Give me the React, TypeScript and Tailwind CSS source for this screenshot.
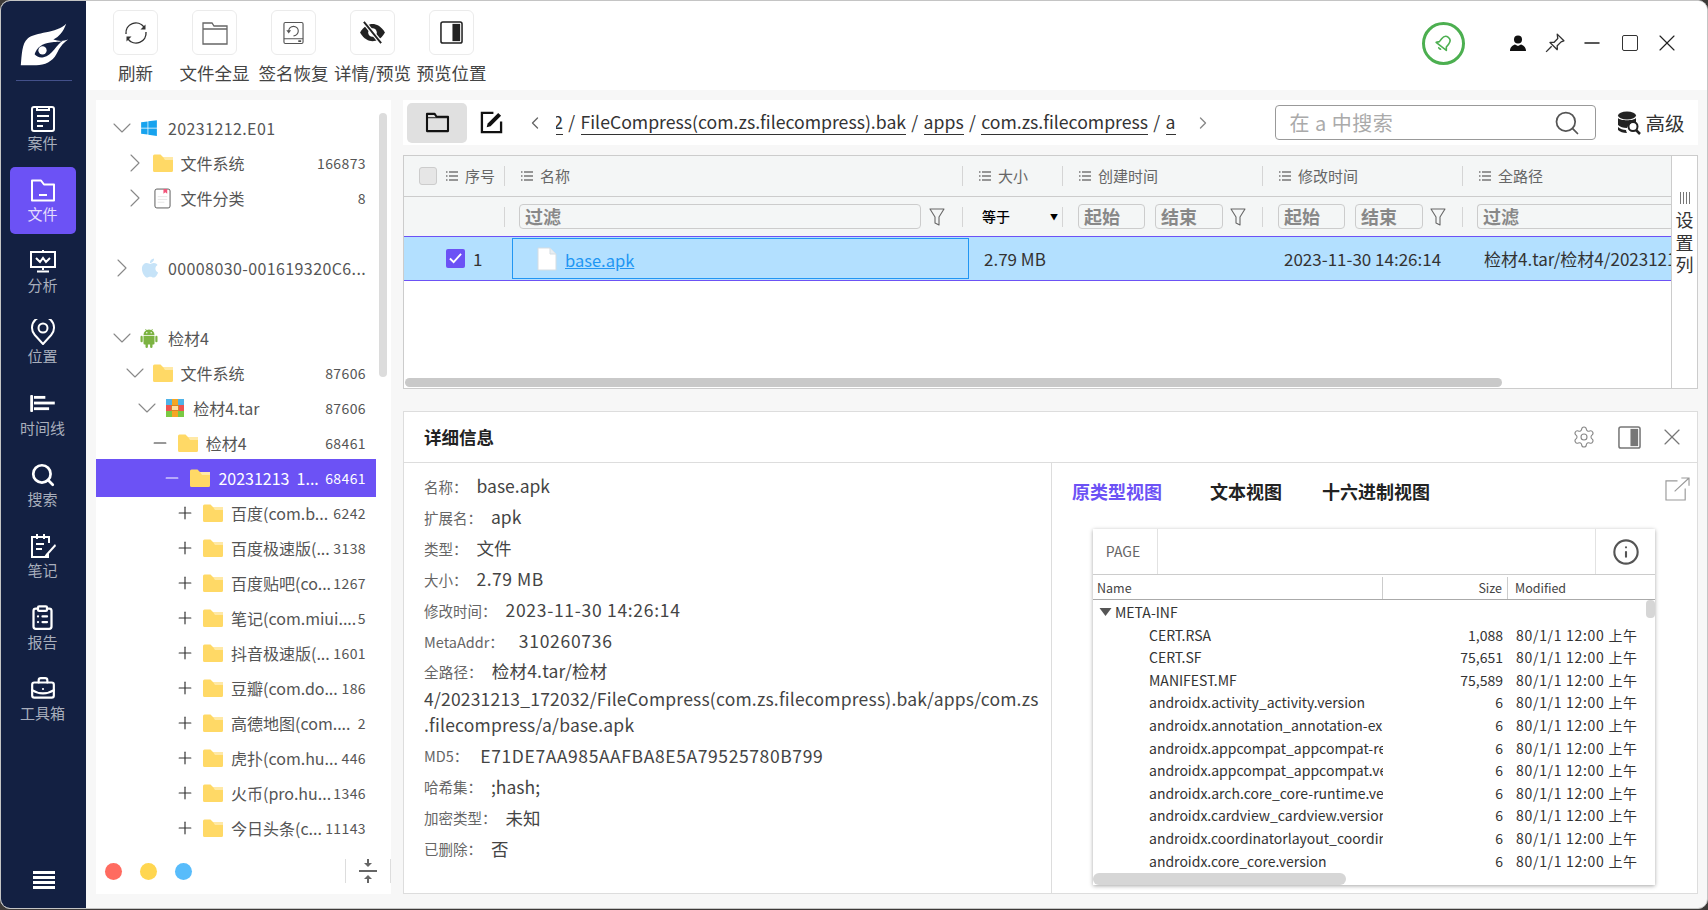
import type { ReactNode } from "react";
import { FaApple, FaWindows } from "react-icons/fa";
import {
  BriefcaseBusiness,
  ChevronDown,
  ChevronLeft,
  ChevronRight,
  ClipboardList,
  Info,
  Minus,
  Plus,
  Search,
  Settings,
  X,
} from "lucide-react";

type IconProps = { className?: string };

function Logo() {
  return (
    <svg viewBox="0 0 86 80" className="w-[85px] h-[79px] shrink-0">
      <path
        d="M20 65 C21 55 21 43 27 38 C35 31 56 33 66 23 C63 31 59 36 53 39 C58 41 63 41 68 39 C62 43 59 48 56 54 C52 62 42 66 33 65 Z"
        fill="#fff"
      />
      <path d="M34 54 C36 47 42 43 50 42 C55 41 59 42 63 40 C56 44 52 55 43 57 C39 58 36 56 34 54 Z" fill="#132042" />
      <circle cx="42" cy="50" r="4.2" fill="#fff" />
    </svg>
  );
}

function CaseIcon({ className }: IconProps) {
  return (
    <svg viewBox="0 0 24 26" className={className} fill="none" stroke="currentColor" strokeWidth="2">
      <rect x="1" y="1" width="22" height="24" rx="2" />
      <path d="M6 1v3h12V1M6 10h12M6 15h12M6 20h6" />
    </svg>
  );
}

function FileNavIcon({ className }: IconProps) {
  return (
    <svg viewBox="0 0 24 24" className={className} fill="none" stroke="currentColor" strokeWidth="2">
      <path d="M1 2.5h9l3 4h10v16H1z" strokeLinejoin="round" />
      <path d="M8 17h8" />
    </svg>
  );
}

function ChartIcon({ className }: IconProps) {
  return (
    <svg viewBox="0 0 26 24" className={className} fill="none" stroke="currentColor" strokeWidth="2">
      <path d="M1 3h24v15H1zM13 1v2M13 18v3M7 22.5h12" />
      <path d="M6 9l4 4 3-4 3 4 4-4" />
    </svg>
  );
}

function PinNavIcon({ className }: IconProps) {
  return (
    <svg viewBox="0 0 24 26" className={className} fill="none" stroke="currentColor" strokeWidth="2">
      <path d="M12 25L3.800 16A11 11 0 1 1 20.200 16Z" strokeLinejoin="round" />
      <circle cx="12" cy="9" r="4.500" />
    </svg>
  );
}

function TimelineIcon({ className }: IconProps) {
  return (
    <svg viewBox="0 0 26 18" className={className} fill="currentColor">
      <rect x="0" y="0" width="3" height="18" rx="1" />
      <rect x="4" y="1" width="12" height="3" />
      <rect x="4" y="7" width="22" height="3" />
      <rect x="4" y="13" width="16" height="3" />
    </svg>
  );
}

function NoteIcon({ className }: IconProps) {
  return (
    <svg viewBox="0 0 26 26" className={className} fill="none" stroke="currentColor" strokeWidth="2">
      <path d="M18 21v3H2V4h17v6" />
      <path d="M7 1v5M14 1v5M6 11h8M6 16h6" />
      <path d="M25 11l-9 10-2 3 3-1 9-10z" fill="currentColor" stroke="none" />
    </svg>
  );
}

function MenuLines() {
  return (
    <div className="flex flex-col gap-[2px] w-[22px]">
      <div className="h-[3px] bg-white" />
      <div className="h-[3px] bg-white" />
      <div className="h-[3px] bg-white" />
      <div className="h-[3px] bg-white" />
    </div>
  );
}

function RefreshIcon() {
  return (
    <svg viewBox="0 0 24 24" className="w-[24px] h-[24px]" fill="none" stroke="#333" strokeWidth="1.4">
      <path d="M2 13A10 10 0 0 1 20 6" />
      <path d="M22 11A10 10 0 0 1 4 18" />
      <path d="M21.5 3.5v5h-5z" fill="#333" stroke="none" />
      <path d="M2.5 20.5v-5h5z" fill="#333" stroke="none" />
    </svg>
  );
}

function FolderOutline() {
  return (
    <svg viewBox="0 0 26 24" className="w-[26px] h-[24px]" fill="none" stroke="#666" strokeWidth="1.3">
      <path d="M1 2h9l2 3h13v18H1zM1 8h24" />
    </svg>
  );
}

function DiskRestore() {
  return (
    <svg viewBox="0 0 22 24" className="w-[21px] h-[24px]" fill="none" stroke="#555" strokeWidth="1.2">
      <rect x="1" y="1" width="20" height="22" rx="1.5" />
      <path d="M1 18h20" />
      <path d="M6 10a5 5 0 1 1 5 5" />
      <path d="M3.5 9h5L6 12.5z" fill="#555" stroke="none" />
      <path d="M16 20.5h3" strokeWidth="1.6" />
    </svg>
  );
}

function EyeOff() {
  return (
    <svg viewBox="0 0 28 24" className="w-[27px] h-[23px]">
      <path d="M1 12C5 5 10 3 14 3s9 2 13 9c-4 7-9 9-13 9S5 19 1 12z" fill="#222" />
      <circle cx="14" cy="12" r="4.5" fill="#fff" />
      <path d="M5 1l18 22" stroke="#fff" strokeWidth="4.5" />
      <path d="M5 1l18 22" stroke="#222" strokeWidth="2" />
    </svg>
  );
}

function PaneIcon({ dark }: { dark: boolean }) {
  return (
    <svg viewBox="0 0 24 24" className="w-[23px] h-[23px]" fill="none">
      <rect x="1" y="1" width="22" height="22" rx="2" stroke={dark ? "#222" : "#777"} strokeWidth="1.6" />
      <rect x="13" y="3" width="8" height="18" fill={dark ? "#222" : "#777"} />
    </svg>
  );
}

function Bell() {
  return (
    <svg viewBox="0 0 20 20" className="w-[21px] h-[21px]" fill="none" stroke="#4caf50" strokeWidth="1.5" strokeLinejoin="round">
      <g transform="rotate(38 10 10)">
        <path d="M10 2.500c3 0 4.200 2.500 4.200 5v3.500l2 2.500H3.800l2-2.500V7.500c0-2.500 1.200-5 4.200-5z" />
        <path d="M8.500 15.500a1.800 1.800 0 0 0 3 0" />
      </g>
    </svg>
  );
}

function UserIcon() {
  return (
    <svg viewBox="0 0 16 16" className="w-[16px] h-[16px]" fill="#111">
      <circle cx="8" cy="4.5" r="4" />
      <path d="M0 16c0-4 3-6 5-6.5l3 1.5 3-1.5c2 .5 5 2.5 5 6.5z" />
    </svg>
  );
}

function PinIcon() {
  return (
    <svg viewBox="0 0 18 18" className="w-[20px] h-[20px]" fill="none" stroke="#333" strokeWidth="1.2" strokeLinejoin="round">
      <path d="M11 1l6 6-2.500 1-3.500 3.500 0 3.500-6.500-6.500 3.500 0 3.500-3.500z" />
      <path d="M6 12l-5 5" />
    </svg>
  );
}

function Funnel() {
  return (
    <svg viewBox="0 0 16 18" className="w-[16px] h-[18px]" fill="none" stroke="#666" strokeWidth="1.1" strokeLinejoin="round">
      <path d="M1 1h14l-5 8v8l-4-2V9z" />
    </svg>
  );
}

function ListIcon() {
  return (
    <svg viewBox="0 0 12 10" className="w-[12px] h-[10px] shrink-0" stroke="#777" strokeWidth="1.3">
      <path d="M3 1h9M3 5h9M3 9h9M0 1h1.5M0 5h1.5M0 9h1.5" />
    </svg>
  );
}

function FolderYellow() {
  return (
    <svg viewBox="0 0 20 18" className="w-[20px] h-[18px]">
      <path d="M0 2a1.5 1.5 0 0 1 1.5-1.5h6L10 3h8.5A1.5 1.5 0 0 1 20 4.500V16.500a1.500 1.500 0 0 1-1.500 1.500h-17A1.500 1.500 0 0 1 0 16.500z" fill="#ffd966" />
      <path d="M10 3h10v3h-8z" fill="#ffe9a6" />
    </svg>
  );
}

function TarIcon() {
  return (
    <svg viewBox="0 0 18 18" className="w-[18px] h-[18px] ml-[1px]">
      <rect width="6" height="6" fill="#4fb3e8" />
      <rect x="6" width="6" height="6" fill="#f5a623" />
      <rect x="12" width="6" height="6" fill="#4fb3e8" />
      <rect y="6" width="18" height="6" fill="#ef5350" />
      <rect y="12" width="6" height="6" fill="#7ac943" />
      <rect x="6" y="12" width="6" height="6" fill="#f5a623" />
      <rect x="12" y="12" width="6" height="6" fill="#7ac943" />
      <rect x="5.500" y="6.500" width="7" height="5" fill="#ffe0a0" stroke="#d98324" />
    </svg>
  );
}

function CategoryIcon() {
  return (
    <svg viewBox="0 0 18 22" className="w-[17px] h-[21px] ml-[1px]">
      <rect x="1" y="1" width="16" height="20" rx="2" fill="#fff" stroke="#555" strokeWidth="1" />
      <path d="M10 1h4v5l-2-1.500L10 6z" fill="#f2557a" />
      <path d="M4 9h10M4 12h10M4 15h7" stroke="#e5e5e5" />
    </svg>
  );
}

function AndroidIcon() {
  return (
    <svg viewBox="0 0 18 20" className="w-[18px] h-[20px]" fill="#7cb342">
      <path d="M3.500 7a5.500 5.500 0 0 1 11 0z" />
      <path d="M5.500 1l1.500 2.500M12.500 1L11 3.500" stroke="#7cb342" strokeWidth="0.8" />
      <path d="M3.500 7.800h11v7.700a1 1 0 0 1-1 1h-9a1 1 0 0 1-1-1z" />
      <rect x="0.500" y="7.800" width="2.200" height="6.500" rx="1.100" />
      <rect x="15.300" y="7.800" width="2.200" height="6.500" rx="1.100" />
      <rect x="5.500" y="15" width="2.400" height="5" rx="1.200" />
      <rect x="10.100" y="15" width="2.400" height="5" rx="1.200" />
      <circle cx="6.800" cy="4.800" r="0.700" fill="#fff" />
      <circle cx="11.200" cy="4.800" r="0.700" fill="#fff" />
    </svg>
  );
}

function DocIcon() {
  return (
    <svg viewBox="0 0 20 24" className="w-[20px] h-[24px]">
      <path d="M1 1h12l6 6v16H1z" fill="#fff" stroke="#d5dde2" />
      <path d="M13 1v6h6" fill="#e8eef2" stroke="#d5dde2" />
    </svg>
  );
}

function DbSearch() {
  return (
    <svg viewBox="0 0 24 24" className="w-[24px] h-[24px]">
      <ellipse cx="10" cy="4.500" rx="9" ry="4" fill="#222" />
      <path d="M1 7c2 3 16 3 18 0v4c-5 0-8 3-9 6-4 0-7-1-9-3z" fill="#222" />
      <path d="M1 16c2 2 5 3 8 3 0 1 .5 2 1 3-4 0-7-1-9-3z" fill="#222" />
      <circle cx="16" cy="15.500" r="4.500" fill="none" stroke="#222" strokeWidth="2" />
      <path d="M19 19l4 4" stroke="#222" strokeWidth="2.500" />
    </svg>
  );
}

function Compress() {
  return (
    <svg viewBox="0 0 18 24" className="w-[18px] h-[24px]" fill="#666">
      <path d="M0 11h18v2H0zM8 0h2v4h3l-4 4-4-4h3zM9 16l4 4h-3v4H8v-4H5z" />
    </svg>
  );
}

function ExternalBox() {
  return (
    <svg viewBox="0 0 26 25" className="w-[25px] h-[24px]" fill="none" stroke="#999" strokeWidth="1.2">
      <path d="M13 4H1v20h20V12M10 15L25 1M17 1h8v8" />
    </svg>
  );
}

const navItems = [
  { label: "案件", icon: <CaseIcon className="w-[24px] h-[26px]" /> },
  { label: "文件", icon: <FileNavIcon className="w-[24px] h-[24px]" />, active: true },
  { label: "分析", icon: <ChartIcon className="w-[26px] h-[24px]" /> },
  { label: "位置", icon: <PinNavIcon className="w-[24px] h-[26px]" /> },
  { label: "时间线", icon: <TimelineIcon className="w-[25px] h-[17px]" /> },
  { label: "搜索", icon: <Search className="w-[26px] h-[26px]" strokeWidth={2.5} /> },
  { label: "笔记", icon: <NoteIcon className="w-[26px] h-[26px]" /> },
  { label: "报告", icon: <ClipboardList className="w-[27px] h-[27px]" strokeWidth={2} /> },
  { label: "工具箱", icon: <BriefcaseBusiness className="w-[26px] h-[26px]" strokeWidth={2} /> },
];

const toolButtons = [
  { label: "刷新", icon: <RefreshIcon /> },
  { label: "文件全显", icon: <FolderOutline /> },
  { label: "签名恢复", icon: <DiskRestore /> },
  { label: "详情/预览", icon: <EyeOff /> },
  { label: "预览位置", icon: <PaneIcon dark /> },
];

type TreeRow = {
  level: number;
  toggle: "down" | "right" | "minus" | "plus";
  icon: ReactNode;
  name: string;
  count?: string;
  selected?: boolean;
  gapAfter?: boolean;
  wide?: boolean;
};

const folder = <FolderYellow />;

const treeRows: TreeRow[] = [
  { level: 0, toggle: "down", icon: <FaWindows className="w-[18px] h-[18px] text-[#17a3ee]" />, name: "20231212.E01", wide: true },
  { level: 1, toggle: "right", icon: folder, name: "文件系统", count: "166873" },
  { level: 1, toggle: "right", icon: <CategoryIcon />, name: "文件分类", count: "8", gapAfter: true },
  { level: 0, toggle: "right", icon: <FaApple className="w-[20px] h-[22px] text-[#c6e3f8]" />, name: "00008030-001619320C6...", gapAfter: true, wide: true },
  { level: 0, toggle: "down", icon: <AndroidIcon />, name: "检材4" },
  { level: 1, toggle: "down", icon: folder, name: "文件系统", count: "87606" },
  { level: 2, toggle: "down", icon: <TarIcon />, name: "检材4.tar", count: "87606" },
  { level: 3, toggle: "minus", icon: folder, name: "检材4", count: "68461" },
  { level: 4, toggle: "minus", icon: folder, name: "20231213\u00a0\u00a01...", count: "68461", selected: true },
  { level: 5, toggle: "plus", icon: folder, name: "百度(com.b...", count: "6242" },
  { level: 5, toggle: "plus", icon: folder, name: "百度极速版(...", count: "3138" },
  { level: 5, toggle: "plus", icon: folder, name: "百度贴吧(co...", count: "1267" },
  { level: 5, toggle: "plus", icon: folder, name: "笔记(com.miui....", count: "5" },
  { level: 5, toggle: "plus", icon: folder, name: "抖音极速版(...", count: "1601" },
  { level: 5, toggle: "plus", icon: folder, name: "豆瓣(com.do...", count: "186" },
  { level: 5, toggle: "plus", icon: folder, name: "高德地图(com....", count: "2" },
  { level: 5, toggle: "plus", icon: folder, name: "虎扑(com.hu...", count: "446" },
  { level: 5, toggle: "plus", icon: folder, name: "火币(pro.hu...", count: "1346" },
  { level: 5, toggle: "plus", icon: folder, name: "今日头条(c...", count: "11143" },
];

const pathParts = ["20231213_172032", "FileCompress(com.zs.filecompress).bak", "apps", "com.zs.filecompress", "a"];

const apkFiles = [
  { name: "CERT.RSA", size: "1,088" },
  { name: "CERT.SF", size: "75,651" },
  { name: "MANIFEST.MF", size: "75,589" },
  { name: "androidx.activity_activity.version", size: "6" },
  { name: "androidx.annotation_annotation-experimental.version", size: "6" },
  { name: "androidx.appcompat_appcompat-resources.version", size: "6" },
  { name: "androidx.appcompat_appcompat.version", size: "6" },
  { name: "androidx.arch.core_core-runtime.version", size: "6" },
  { name: "androidx.cardview_cardview.version", size: "6" },
  { name: "androidx.coordinatorlayout_coordinatorlayout.version", size: "6" },
  { name: "androidx.core_core.version", size: "6" },
];

const details = [
  { label: "名称：", value: "base.apk", cls: "ml-[9px]" },
  { label: "扩展名：", value: "apk", cls: "ml-[9px]" },
  { label: "类型：", value: "文件", cls: "ml-[9px]" },
  { label: "大小：", value: "2.79 MB", cls: "ml-[9px] tracking-[0.5px]" },
  { label: "修改时间：", value: "2023-11-30 14:26:14", cls: "ml-[9px] tracking-[0.7px]" },
  { label: "MetaAddr：", value: "310260736", cls: "ml-[15px] tracking-[0.7px]" },
];

const detailsAfter = [
  { label: "MD5：", value: "E71DE7AA985AAFBA8E5A79525780B799", cls: "ml-[12px] tracking-[0.6px]" },
  { label: "哈希集：", value: ";hash;", cls: "ml-[9px]" },
  { label: "加密类型：", value: "未知", cls: "ml-[9px]" },
  { label: "已删除：", value: "否", cls: "ml-[9px]" },
];

function Sidebar() {
  return (
    <aside className="w-[85px] shrink-0 bg-[#132042] flex flex-col items-center">
      <Logo />
      <div className="w-[56px] h-px bg-[#43508a] shrink-0" />
      <nav className="mt-[15px] mr-[2px] flex flex-col items-center">
        {navItems.map((item) => (
          <div
            key={item.label}
            className={`w-[66px] h-[67px] mb-[4.3px] rounded-[5px] flex flex-col items-center justify-center text-white ${
              item.active ? "bg-[#6c52f5]" : ""
            }`}
          >
            <div className="h-[30px] flex items-center justify-center">{item.icon}</div>
            <span className={`text-[15px] leading-[20px] -mt-[1px] mb-[3px] ${item.active ? "text-[#e4defc]" : "text-[#a8aebc]"}`}>{item.label}</span>
          </div>
        ))}
      </nav>
      <div className="mt-auto mb-[19px]">
        <MenuLines />
      </div>
    </aside>
  );
}

function Toolbar() {
  return (
    <header className="h-[89px] shrink-0 bg-white flex items-start pl-[10px] pr-[26px]">
      <div className="flex pt-[9px]">
        {toolButtons.map((b) => (
          <div key={b.label} className="w-[79px] flex flex-col items-center">
            <div className="w-[45px] h-[45px] rounded-[6px] border border-[#ebebeb] flex items-center justify-center">{b.icon}</div>
            <span className="mt-[7px] text-[17.500px] leading-[22px] text-[#444] whitespace-nowrap">{b.label}</span>
          </div>
        ))}
      </div>
      <div className="ml-auto h-[84px] flex items-center">
        <div className="w-[43px] h-[43px] rounded-full border-[3px] border-[#4caf50] flex items-center justify-center">
          <Bell />
        </div>
        <div className="ml-[45px] flex items-center">
          <UserIcon />
          <div className="ml-[19px]">
            <PinIcon />
          </div>
          <Minus className="ml-[15px] w-[24px] h-[24px] text-[#222]" strokeWidth={1.5} />
          <div className="ml-[18px] w-[16px] h-[16px] rounded-[2px] border-[1.4px] border-[#333]" />
          <X className="ml-[15px] w-[28px] h-[28px] text-[#222]" strokeWidth={1} />
        </div>
      </div>
    </header>
  );
}

function Toggle({ kind, selected }: { kind: TreeRow["toggle"]; selected?: boolean }) {
  const cls = `w-[20px] h-[20px] shrink-0 ${selected ? "text-white" : "text-[#333]"}`;
  if (kind === "down") return <ChevronDown className="w-[32px] h-[32px] shrink-0 text-[#888]" strokeWidth={0.8} />;
  if (kind === "right") return <ChevronRight className="w-[32px] h-[32px] shrink-0 text-[#888]" strokeWidth={0.8} />;
  if (kind === "minus") return <Minus className={cls} strokeWidth={1.4} />;
  return <Plus className={cls} strokeWidth={1.4} />;
}

function Tree() {
  return (
    <section className="relative w-[295px] shrink-0 bg-white flex flex-col">
      <div className="absolute left-[283px] top-[13px] w-[8px] h-[264px] rounded-[4px] bg-[#dcdcdc]" />
      <div className="pt-[10.500px] w-[280px] flex-1 overflow-hidden">
        {treeRows.map((row, i) => (
          <div
            key={i}
            style={{ paddingLeft: 19 + row.level * 12.6 }}
            className={`flex items-center pr-[10px] ${row.gapAfter ? "mb-[35px]" : ""} ${
              row.selected ? "h-[38px] -my-[1.5px] bg-[#6c52f5] text-white" : "h-[35px] text-[#555]"
            }`}
          >
            <div className="w-[14px] flex items-center justify-center shrink-0">
              <Toggle kind={row.toggle} selected={row.selected} />
            </div>
            <div className="ml-[11px] w-[20px] shrink-0 flex items-center">{row.icon}</div>
            <span className={`ml-[8px] text-[16px] whitespace-nowrap ${row.wide ? "tracking-[0.4px]" : ""}`}>{row.name}</span>
            {row.count && <span className="ml-auto text-[14px] tracking-[0.4px] whitespace-nowrap">{row.count}</span>}
          </div>
        ))}
      </div>
      <div className="h-[46px] shrink-0 flex items-center pl-[9px]">
        <div className="w-[17px] h-[17px] rounded-full bg-[#ff6b60]" />
        <div className="ml-[18px] w-[17px] h-[17px] rounded-full bg-[#ffd650]" />
        <div className="ml-[18px] w-[17px] h-[17px] rounded-full bg-[#58bcfb]" />
        <div className="ml-auto w-[46px] h-[24px] border-x border-[#ddd] flex items-center justify-center">
          <Compress />
        </div>
      </div>
    </section>
  );
}

function PathBar() {
  return (
    <div className="h-[45px] shrink-0 bg-white flex items-center pl-[4px]">
      <div className="w-[60px] h-[40px] rounded-[5px] bg-[#e0e0e0] flex items-center justify-center">
        <svg viewBox="0 0 26 22" className="w-[25px] h-[21px]" fill="none" stroke="#111" strokeWidth="2.2" strokeLinejoin="round">
          <path d="M2 2h8l2 3h12v15H2z" />
          <path d="M2 6h22" strokeWidth="1" />
        </svg>
      </div>
      <svg viewBox="0 0 24 24" className="ml-[13px] w-[23px] h-[23px]" fill="none">
        <path d="M14 2H2v20h20V11" stroke="#111" strokeWidth="2.4" />
        <path d="M8 13L19 2l3 3-11 11-4 1z" fill="#111" />
      </svg>
      <ChevronLeft className="ml-[22px] w-[20px] h-[20px] text-[#666]" strokeWidth={1.6} />
      <div className="ml-[10.500px] w-[620px] overflow-hidden flex justify-end">
        <div className="flex items-center shrink-0 text-[17.650px] text-[#333] whitespace-nowrap">
          {pathParts.map((p, i) => (
            <span key={p} className="flex items-center">
              {i > 0 && <span className="mx-[5.300px]">/</span>}
              <span className="border-b border-[#333] leading-[24px]">{p}</span>
            </span>
          ))}
        </div>
      </div>
      <ChevronRight className="ml-[17.500px] w-[20px] h-[20px] text-[#888]" strokeWidth={1.6} />
      <div className="ml-[61.500px] w-[321px] h-[35px] rounded-[4px] border border-[#999] flex items-center pl-[14px] pr-[14px]">
        <span className="text-[20px] tracking-[0.5px] text-[#aaa] whitespace-nowrap">在 a 中搜索</span>
        <Search className="ml-auto w-[28px] h-[28px] text-[#555]" strokeWidth={1.5} />
      </div>
      <div className="ml-[21px] flex items-center gap-[5px]">
        <DbSearch />
        <span className="text-[19.500px] text-[#333] whitespace-nowrap">高级</span>
      </div>
    </div>
  );
}

function FilterBox({ text, className }: { text: string; className: string }) {
  return (
    <div className={`h-[25px] rounded-[4px] border border-[#ccc] bg-[#f4f6f6] pl-[5px] text-[18px] leading-[23px] font-bold text-[#888] overflow-hidden ${className}`}>
      {text}
    </div>
  );
}

function ColDivider() {
  return <div className="w-px h-[20px] bg-[#d5d5d5] shrink-0" />;
}

function HeaderCell({ label }: { label: string }) {
  return (
    <div className="flex items-center">
      <ColDivider />
      <div className="ml-[16px]">
        <ListIcon />
      </div>
      <span className="ml-[7px] text-[15px] text-[#666]">{label}</span>
    </div>
  );
}

function DateFilter() {
  return (
    <div className="flex items-center">
      <ColDivider />
      <FilterBox text="起始" className="ml-[15px] w-[67px]" />
      <FilterBox text="结束" className="ml-[10px] w-[68px]" />
      <div className="ml-[7px]">
        <Funnel />
      </div>
    </div>
  );
}

function FileTable() {
  return (
    <div className="mt-[10px] h-[234px] shrink-0 border border-[#ccc] bg-white flex">
      <div className="relative flex-1 min-w-0 overflow-hidden">
        <div className="h-[41px] bg-[#f4f6f6] border-b border-[#ccc] grid grid-cols-[100px_458px_100px_200px_200px_minmax(0,1fr)]">
          <div className="flex items-center pl-[15px]">
            <div className="w-[18px] h-[18px] rounded-[3px] border border-[#ccc] bg-[#e6e6e6]" />
            <div className="ml-[9px]">
              <ListIcon />
            </div>
            <span className="ml-[7px] text-[15px] text-[#666]">序号</span>
          </div>
          <HeaderCell label="名称" />
          <HeaderCell label="大小" />
          <HeaderCell label="创建时间" />
          <HeaderCell label="修改时间" />
          <HeaderCell label="全路径" />
        </div>
        <div className="h-[39px] bg-[#f4f6f6] grid grid-cols-[100px_458px_100px_200px_200px_minmax(0,1fr)]">
          <div />
          <div className="flex items-center">
            <ColDivider />
            <FilterBox text="过滤" className="ml-[14px] w-[402px]" />
            <div className="ml-[8px]">
              <Funnel />
            </div>
          </div>
          <div className="flex items-center">
            <ColDivider />
            <span className="ml-[19px] text-[14px] font-medium text-black">等于</span>
            <span className="ml-[40px] text-[8px] text-black">▼</span>
          </div>
          <DateFilter />
          <DateFilter />
          <div className="flex items-center">
            <ColDivider />
            <FilterBox text="过滤" className="ml-[14px] flex-1 border-r-0 rounded-r-none" />
          </div>
        </div>
        <div className="h-[45px] bg-[#b3e0ff] border-y border-[#6c52f5] grid grid-cols-[100px_458px_100px_200px_200px_minmax(0,1fr)] text-[17px] text-[#333]">
          <div className="flex items-center pl-[42px]">
            <div className="w-[19px] h-[19px] rounded-[2px] bg-[#6c52f5] flex items-center justify-center">
              <svg viewBox="0 0 14 14" className="w-[13px] h-[13px]" fill="none" stroke="#fff" strokeWidth="2">
                <path d="M1 7l4 4 8-9" />
              </svg>
            </div>
            <span className="ml-[8px]">1</span>
          </div>
          <div className="ml-[8px] mt-[1px] h-[41px] w-[457px] border border-[#2196f3] flex items-center pl-[24px]">
            <DocIcon />
            <span className="ml-[8px] pt-[3px] text-[16.500px] text-[#2196f3] underline">base.apk</span>
          </div>
          <div className="flex items-center pl-[22px] whitespace-nowrap">2.79 MB</div>
          <div />
          <div className="flex items-center pl-[22px] whitespace-nowrap">2023-11-30 14:26:14</div>
          <div className="flex items-center pl-[22px] whitespace-nowrap overflow-hidden">检材4.tar/检材4/20231213_172032</div>
        </div>
        <div className="absolute left-[1px] bottom-[1px] w-[1097px] h-[9px] rounded-[5px] bg-[#c9c9c9]" />
      </div>
      <div className="w-[26px] shrink-0 border-l border-[#ccc] flex flex-col items-center pt-[36px]">
        <div className="flex gap-[2px] h-[12px]">
          <div className="w-px bg-[#777]" />
          <div className="w-px bg-[#777]" />
          <div className="w-px bg-[#777]" />
          <div className="w-px bg-[#777]" />
        </div>
        <div className="mt-[4px] w-[18px] text-[18px] leading-[22.500px] text-[#333] text-center">设置列</div>
      </div>
    </div>
  );
}

function DetailRow({ label, value, cls }: { label: string; value: string; cls: string }) {
  return (
    <div className="h-[31px] flex items-center whitespace-nowrap">
      <span className="text-[14.500px] text-[#666]">{label}</span>
      <span className={`text-[17.500px] text-[#444] ${cls}`}>{value}</span>
    </div>
  );
}

function ApkPreview() {
  return (
    <div className="relative mt-[15px] ml-[41px] w-[562px] h-[356px] bg-white shadow-[0_1px_4px_rgba(0,0,0,0.35)] overflow-hidden">
      <div className="h-[46px] border-b border-[#ccc] flex items-stretch">
        <div className="w-[65px] border-r border-[#e2e2e2] flex items-center justify-center pr-[4px] text-[14px] text-[#666]">PAGE</div>
        <div className="ml-auto w-[60px] border-l border-[#e2e2e2] flex items-center justify-center">
          <Info className="w-[28px] h-[28px] text-[#555]" strokeWidth={1.8} />
        </div>
      </div>
      <div className="mt-[2px] h-[23px] border-b border-[#aaa] grid grid-cols-[290px_125px_1fr] text-[12.500px] leading-[22px] text-[#444]">
        <div className="pl-[4px] border-r border-[#ccc]">Name</div>
        <div className="pr-[5px] text-right border-r border-[#ccc]">Size</div>
        <div className="pl-[7px]">Modified</div>
      </div>
      <div className="pt-[1px] text-[14px] leading-[22.600px] text-[#333]">
        <div className="flex items-center h-[22.600px] pl-[6px]">
          <svg viewBox="0 0 12 8" className="w-[13px] h-[8px]" fill="#555">
            <path d="M0 0h12L6 8z" />
          </svg>
          <span className="ml-[3px]">META-INF</span>
        </div>
        {apkFiles.map((f) => (
          <div key={f.name} className="grid grid-cols-[290px_125px_1fr] h-[22.600px]">
            <div className="pl-[56px] overflow-hidden whitespace-nowrap">{f.name}</div>
            <div className="pr-[5px] text-right">{f.size}</div>
            <div className="pl-[8px] whitespace-nowrap tracking-[0.7px]">80/1/1 12:00 上午</div>
          </div>
        ))}
      </div>
      <div className="absolute right-0 top-[71px] w-[9px] h-[18px] rounded-[4px] bg-[#d6d6d6]" />
      <div className="absolute left-0 bottom-0 w-[253px] h-[12px] rounded-[6px] bg-[#d6d6d6]" />
    </div>
  );
}

function DetailPanel() {
  return (
    <div className="mt-[22px] flex-1 min-h-0 border border-[#ddd] bg-white flex flex-col">
      <div className="h-[51px] shrink-0 border-b border-[#ddd] flex items-center pl-[20px] pr-[11px]">
        <span className="text-[17.500px] pt-[1px] font-bold text-[#222]">详细信息</span>
        <Settings className="ml-auto w-[24px] h-[24px] text-[#888]" strokeWidth={1.1} />
        <div className="ml-[22px]">
          <PaneIcon dark={false} />
        </div>
        <X className="ml-[17px] w-[28px] h-[28px] text-[#777]" strokeWidth={1} />
      </div>
      <div className="flex-1 min-h-0 flex">
        <div className="w-[648px] shrink-0 border-r border-[#ddd] pl-[20px] pr-[10px] pt-[8px]">
          {details.map((d) => (
            <DetailRow key={d.label} label={d.label} value={d.value} cls={d.cls} />
          ))}
          <div className="mt-[1px] text-[17.500px] leading-[26.500px] tracking-[0.2px] text-[#444] whitespace-nowrap">
            <span className="text-[14.500px] text-[#666]">全路径：</span>
            <span className="ml-[9px]">检材4.tar/检材</span>
            <br />
            4/20231213_172032/FileCompress(com.zs.filecompress).bak/apps/com.zs
            <br />
            .filecompress/a/base.apk
          </div>
          <div className="mt-[2px]">
            {detailsAfter.map((d) => (
              <DetailRow key={d.label} label={d.label} value={d.value} cls={d.cls} />
            ))}
          </div>
        </div>
        <div className="flex-1 min-w-0">
          <div className="h-[51px] flex items-center pl-[20px] pr-[7px] text-[18px] font-bold text-[#222] pt-[5px]">
            <span className="text-[#6c52f5]">原类型视图</span>
            <span className="ml-[48px]">文本视图</span>
            <span className="ml-[40px]">十六进制视图</span>
            <div className="ml-auto -mt-[4px]">
              <ExternalBox />
            </div>
          </div>
          <ApkPreview />
        </div>
      </div>
    </div>
  );
}

export default function App() {
  return (
    <div className="w-[1708px] h-[910px] bg-[#3d3a38] overflow-hidden font-['Noto_Sans_CJK_SC',sans-serif]">
      <div className="w-full h-[909px] rounded-[10px] border border-[#c4c4c4] overflow-hidden bg-[#f7f7f7] flex">
        <Sidebar />
        <div className="flex-1 min-w-0 flex flex-col">
          <Toolbar />
          <main className="flex-1 min-h-0 flex pt-[10px] pl-[10px] pr-[9px] pb-[14px]">
            <Tree />
            <div className="ml-[12px] flex-1 min-w-0 flex flex-col">
              <PathBar />
              <FileTable />
              <DetailPanel />
            </div>
          </main>
        </div>
      </div>
    </div>
  );
}
